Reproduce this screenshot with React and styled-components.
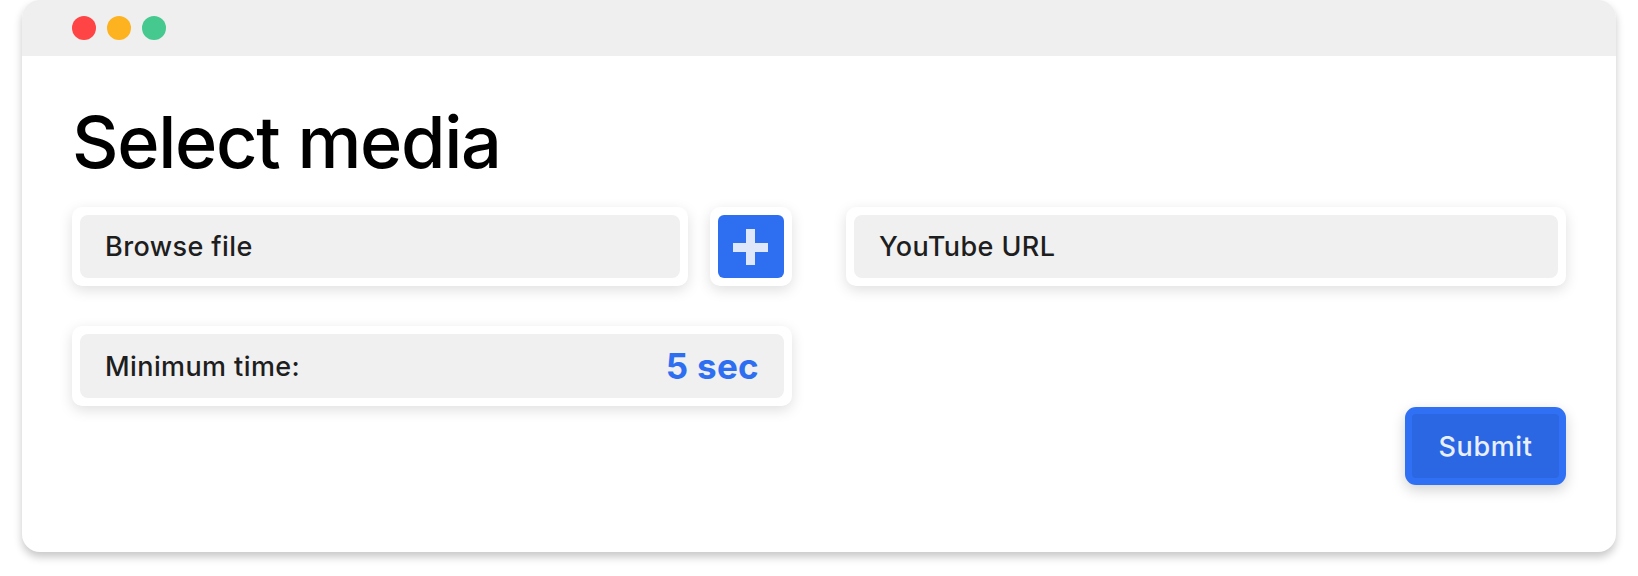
import React from 'react';
import styled, { createGlobalStyle } from 'styled-components';

const GlobalStyle = createGlobalStyle`
  html, body {
    margin: 0;
    padding: 0;
    background: #ffffff;
    font-family: Inter, "Noto Sans", "Liberation Sans", sans-serif;
  }
`;

const Page = styled.div`
  padding: 0 22px 24px;
`;

const Window = styled.div`
  width: 1594px;
  height: 552px;
  box-sizing: border-box;
  background: #ffffff;
  border-radius: 18px;
  overflow: hidden;
  box-shadow: 0 5px 9px rgba(0, 0, 0, 0.22);
  display: flex;
  flex-direction: column;
`;

const TitleBar = styled.div`
  height: 56px;
  flex: none;
  background: #efefef;
  display: flex;
  align-items: center;
  gap: 11px;
  padding-left: 50px;
`;

const Dot = styled.span`
  width: 24px;
  height: 24px;
  border-radius: 50%;
  background: ${(p) => p.$color};
`;

const Content = styled.div`
  padding: 42px 50px 0;
  display: flex;
  flex-direction: column;
`;

const Title = styled.h1`
  margin: 0 0 22px;
  font-size: 72px;
  line-height: 87px;
  font-weight: 500;
  color: #000;
  letter-spacing: -1.3px;
`;

const Grid = styled.div`
  display: grid;
  grid-template-columns: 1fr 1fr;
  column-gap: 54px;
  row-gap: 40px;
`;

const Cell = styled.div`
  display: flex;
  gap: 22px;
`;

const Card = styled.div`
  background: #fff;
  border-radius: 10px;
  padding: 8px;
  box-shadow: 0 4px 14px rgba(0, 0, 0, 0.13);
  display: flex;
  flex: ${(p) => (p.$grow ? 1 : 'none')};
`;

const Field = styled.div`
  flex: 1;
  height: ${(p) => p.$h || 63}px;
  background: #f0f0f0;
  border-radius: 8px;
  padding: 0 25px;
  display: flex;
  align-items: center;
  justify-content: space-between;
  font-size: 27px;
  letter-spacing: 0.4px;
  font-weight: 500;
  color: #1e1e1e;
`;

const Value = styled.span`
  font-size: 35px;
  font-weight: 700;
  color: #2e6ff2;
  letter-spacing: 0.3px;
`;

const AddButton = styled.button`
  width: 66px;
  height: 63px;
  border: none;
  border-radius: 6px;
  background: #2e6ff2;
  display: flex;
  align-items: center;
  justify-content: center;
  padding: 0;
  cursor: pointer;
`;

const Footer = styled.div`
  display: flex;
  justify-content: flex-end;
  margin-top: 1px;
`;

const SubmitButton = styled.button`
  width: 161px;
  height: 78px;
  box-sizing: border-box;
  border: 7px solid #2f70f4;
  border-radius: 11px;
  background: #2b67e3;
  color: #e8efff;
  font-family: inherit;
  font-size: 27px;
  letter-spacing: 0.6px;
  font-weight: 500;
  box-shadow: 0 5px 14px rgba(0, 0, 0, 0.18);
  cursor: pointer;
`;

function PlusIcon() {
  return (
    <svg width="36" height="36" viewBox="0 0 36 36">
      <rect x="0" y="14" width="35" height="9" fill="#dfe7fb" />
      <rect x="13" y="0" width="9" height="36" fill="#dfe7fb" />
    </svg>
  );
}

export default function App() {
  return (
    <>
      <GlobalStyle />
      <Page>
        <Window>
          <TitleBar>
            <Dot $color="#fe4444" />
            <Dot $color="#fdb31f" />
            <Dot $color="#45c98f" />
          </TitleBar>
          <Content>
            <Title>Select media</Title>
            <Grid>
              <Cell>
                <Card $grow>
                  <Field>Browse file</Field>
                </Card>
                <Card>
                  <AddButton aria-label="Add">
                    <PlusIcon />
                  </AddButton>
                </Card>
              </Cell>
              <Cell>
                <Card $grow>
                  <Field>YouTube URL</Field>
                </Card>
              </Cell>
              <Cell>
                <Card $grow>
                  <Field $h={64}>
                    <span>Minimum time:</span>
                    <Value>5 sec</Value>
                  </Field>
                </Card>
              </Cell>
            </Grid>
            <Footer>
              <SubmitButton>Submit</SubmitButton>
            </Footer>
          </Content>
        </Window>
      </Page>
    </>
  );
}
